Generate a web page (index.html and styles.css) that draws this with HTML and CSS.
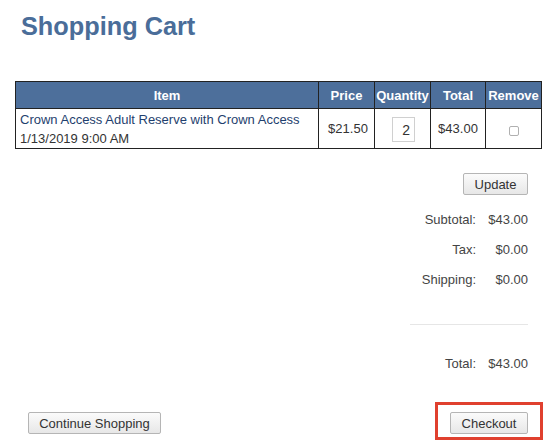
FILE: index.html
```html
<!DOCTYPE html>
<html>
<head>
<meta charset="utf-8">
<link rel="stylesheet" href="styles.css">
</head>
<body>
<div class="page">
  <h1 class="title">Shopping Cart</h1>
  <table class="cart">
    <colgroup>
      <col class="c-item"><col class="c-price"><col class="c-qty"><col class="c-total"><col class="c-remove">
    </colgroup>
    <thead>
      <tr><th>Item</th><th>Price</th><th>Quantity</th><th>Total</th><th>Remove</th></tr>
    </thead>
    <tbody>
      <tr>
        <td class="item"><span class="item-name">Crown Access Adult Reserve with Crown Access</span><br><span class="item-date">1/13/2019 9:00 AM</span></td>
        <td class="num price">$21.50</td>
        <td class="num"><input class="qty" type="text" value="2"></td>
        <td class="num">$43.00</td>
        <td class="num"><input class="remove" type="checkbox"></td>
      </tr>
    </tbody>
  </table>
  <div class="summary">
    <button class="btn">Update</button>
    <div class="totals">
      <div class="row"><span class="label">Subtotal:</span><span class="value">$43.00</span></div>
      <div class="row"><span class="label">Tax:</span><span class="value">$0.00</span></div>
      <div class="row"><span class="label">Shipping:</span><span class="value">$0.00</span></div>
    </div>
    <div class="divider"></div>
    <div class="row grand"><span class="label">Total:</span><span class="value">$43.00</span></div>
  </div>
  <div class="actions">
    <button class="btn">Continue Shopping</button>
    <span class="checkout-wrap"><button class="btn">Checkout</button></span>
  </div>
</div>
</body>
</html>
```
FILE: styles.css
```css
html, body {
  margin: 0;
  padding: 0;
  background: #ffffff;
}
body {
  font-family: "Liberation Sans", Arial, sans-serif;
  font-size: 13px;
  color: #333333;
  min-height: 447px;
}
.page {
  padding: 0 15px 20px;
}
.title {
  margin: 11px 0 40px 6px;
  font-size: 25.3px;
  line-height: 30px;
  font-weight: bold;
  color: #4a6d99;
}
.cart {
  border-collapse: collapse;
  table-layout: fixed;
  width: 527px;
}
.c-item { width: 303px; }
.c-price { width: 56px; }
.c-qty { width: 56px; }
.c-total { width: 55px; }
.c-remove { width: 56px; }
.cart th, .cart td {
  border: 1px solid #222222;
  padding: 0;
}
.cart th {
  background: #4d6f9b;
  color: #ffffff;
  font-weight: bold;
  font-size: 13px;
  height: 26px;
  text-align: center;
  white-space: nowrap;
}
.cart td {
  height: 39px;
  vertical-align: middle;
}
.cart td.item {
  padding: 0 4px;
  line-height: 19px;
  white-space: nowrap;
}
.item-name {
  color: #1f3f6e;
}
.item-date {
  color: #333333;
}
.cart td.num {
  text-align: center;
  color: #333333;
}
.cart td.price {
  padding-left: 3px;
}
.qty {
  box-sizing: border-box;
  width: 23px;
  height: 25px;
  margin: 2px 0 0 2px;
  padding: 0 4px 0 0;
  border: 1px solid #d0d0d0;
  text-align: right;
  font-family: "Liberation Sans", Arial, sans-serif;
  font-size: 14px;
  color: #333333;
  vertical-align: middle;
  outline: none;
}
.remove {
  appearance: none;
  -webkit-appearance: none;
  box-sizing: border-box;
  width: 10px;
  height: 10px;
  margin: 4px 0 0 1px;
  border: 1px solid #b0b0b0;
  border-radius: 2px;
  background: #ffffff;
  vertical-align: middle;
}
.summary {
  display: flex;
  flex-direction: column;
  align-items: flex-end;
  padding: 24px 13px 0 0;
}
.btn {
  box-sizing: border-box;
  height: 22px;
  padding: 0 9px;
  border: 1px solid #b5b5b5;
  border-radius: 2px;
  background: linear-gradient(#fbfbfb, #e7e7e7);
  font-family: "Liberation Sans", Arial, sans-serif;
  font-size: 13px;
  color: #333333;
}
.summary .btn {
  width: 65px;
  margin-bottom: 10px;
}
.totals {
  display: flex;
  flex-direction: column;
}
.row {
  display: flex;
  justify-content: flex-end;
  gap: 12px;
  line-height: 30px;
  color: #444444;
}
.row .value {
  width: 40px;
  text-align: right;
}
.divider {
  width: 118px;
  height: 1px;
  background: #e6e6e6;
  margin: 29px 0 24px;
}
.actions {
  display: flex;
  justify-content: space-between;
  align-items: center;
  padding: 33px 13px 0 13px;
}
.actions > .btn {
  width: 133px;
}
.checkout-wrap {
  position: relative;
  display: block;
}
.checkout-wrap .btn {
  width: 78px;
  display: block;
}
.checkout-wrap::after {
  content: "";
  position: absolute;
  left: -15px;
  top: -10px;
  width: 108px;
  height: 38px;
  box-sizing: border-box;
  border: 3px solid #e0402f;
  pointer-events: none;
}
```
